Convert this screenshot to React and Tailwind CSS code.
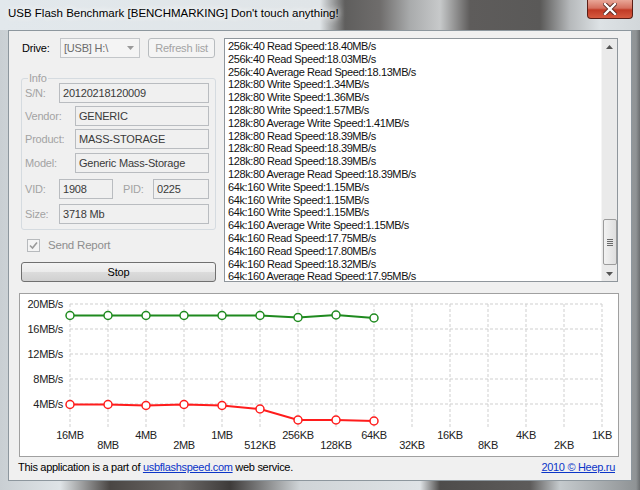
import React from 'react';

const logLines = [
  '256k:40 Read Speed:18.40MB/s',
  '256k:40 Read Speed:18.03MB/s',
  '256k:40 Average Read Speed:18.13MB/s',
  '128k:80 Write Speed:1.34MB/s',
  '128k:80 Write Speed:1.36MB/s',
  '128k:80 Write Speed:1.57MB/s',
  '128k:80 Average Write Speed:1.41MB/s',
  '128k:80 Read Speed:18.39MB/s',
  '128k:80 Read Speed:18.39MB/s',
  '128k:80 Read Speed:18.39MB/s',
  '128k:80 Average Read Speed:18.39MB/s',
  '64k:160 Write Speed:1.15MB/s',
  '64k:160 Write Speed:1.15MB/s',
  '64k:160 Write Speed:1.15MB/s',
  '64k:160 Average Write Speed:1.15MB/s',
  '64k:160 Read Speed:17.75MB/s',
  '64k:160 Read Speed:17.80MB/s',
  '64k:160 Read Speed:18.32MB/s',
  '64k:160 Average Read Speed:17.95MB/s',
];

const sizes = ['16MB', '8MB', '4MB', '2MB', '1MB', '512KB', '256KB', '128KB', '64KB', '32KB', '16KB', '8KB', '4KB', '2KB', '1KB'];
const yLabels = ['20MB/s', '16MB/s', '12MB/s', '8MB/s', '4MB/s'];
const readY = [316.5, 316.5, 316.5, 316.5, 316.5, 316.5, 318.5, 316, 319];
const writeY = [405.5, 405.5, 406.5, 405.5, 406.5, 410, 421, 421, 422];

const gx = (i) => 70 + 38 * i;

function Field({ label, labelW, width, value }) {
  return (
    <div className="flex items-center h-[20px]">
      {label && <span className={`text-[#a3a3a3] ${labelW}`}>{label}</span>}
      <div className={`h-[20px] ${width} border border-[#b9bcc0] bg-[#f0f0f0] px-[3px] leading-[18px] text-[#3a3a3a]`}>{value}</div>
    </div>
  );
}

function Chart() {
  return (
    <svg width="598" height="162" className="block">
      <g transform="translate(-20,-295)">
        {sizes.map((s, i) => (
          <line key={s} x1={gx(i)} y1={305} x2={gx(i)} y2={430} stroke="#cfcfcf" strokeDasharray="3 2" />
        ))}
        {[305, 330, 355, 380, 405].map((y) => (
          <line key={y} x1={70} y1={y} x2={602} y2={y} stroke="#cfcfcf" strokeDasharray="3 2" />
        ))}
        {yLabels.map((l, i) => (
          <text key={l} x={63} y={305 + i * 25 + 4} textAnchor="end" fontSize="11" letterSpacing="-0.3" fill="#222" fontFamily="Liberation Sans, Arial, sans-serif">{l}</text>
        ))}
        {sizes.map((s, i) => (
          <text key={s} x={gx(i)} y={i % 2 === 0 ? 440 : 450} textAnchor="middle" fontSize="11" letterSpacing="-0.3" fill="#222" fontFamily="Liberation Sans, Arial, sans-serif">{s}</text>
        ))}
        <polyline points={readY.map((y, i) => `${gx(i)},${y}`).join(' ')} fill="none" stroke="#1f8a1f" strokeWidth="2" />
        <polyline points={writeY.map((y, i) => `${gx(i)},${y}`).join(' ')} fill="none" stroke="#ff1c1c" strokeWidth="2" />
        {readY.map((y, i) => (
          <circle key={'r' + i} cx={gx(i)} cy={y} r="4" fill="#fff" stroke="#1f8a1f" strokeWidth="1.5" />
        ))}
        {writeY.map((y, i) => (
          <circle key={'w' + i} cx={gx(i)} cy={y} r="4" fill="#fff" stroke="#ff1c1c" strokeWidth="1.5" />
        ))}
      </g>
    </svg>
  );
}

export default function App() {
  return (
    <div className="w-[640px] h-[490px] flex flex-col font-['Liberation_Sans',Arial,sans-serif] text-[11px] tracking-[-0.2px] bg-[linear-gradient(90deg,#c9cfd3_0px,#dfe4e7_60px,#4a4644_110px,#6d6a68_180px,#3e3b3a_230px,#cfd4d7_300px,#dfe3e6_420px,#4e4c4b_440px,#5d5b5a_530px,#c5cacd_560px,#8f9395_636px,#6b6e70_640px)]">
      {/* title bar */}
      <div className="h-[30px] flex items-start relative bg-[linear-gradient(90deg,#e2e8ec_0px,#e0e5e8_320px,#5f5e5d_345px,#6f6d6c_380px,#a9abac_410px,#c7c9ca_440px,#5e5c5b_470px,#5a5958_540px,#b6b9bb_570px,#dde2e5_600px,#d2d7da_640px)]">
        <span className="ml-[8px] mt-[6px] text-[11.5px] tracking-normal leading-[14px] text-black [text-shadow:0_0_6px_#fff,0_0_10px_#fff]">
          USB Flash Benchmark [BENCHMARKING] Don't touch anything!
        </span>
        <div className="absolute left-[587px] top-0 w-[46px] h-[19px] rounded-b-[4px] border border-t-0 border-[#5a1e16] bg-[linear-gradient(#e9a697,#d5705f_45%,#c13a25_55%,#d65a3f)] flex items-center justify-center">
          <svg width="14" height="12" viewBox="0 0 14 12">
            <path d="M2 1 L12 11 M12 1 L2 11" stroke="#5a2a22" strokeWidth="4.2" strokeLinecap="square" />
            <path d="M2 1 L12 11 M12 1 L2 11" stroke="#fff" strokeWidth="2.4" strokeLinecap="square" />
          </svg>
        </div>
      </div>

      {/* client area */}
      <div className="mx-[8px] mb-[9px] flex-1 bg-[#f0f0f0] border border-[#8d979e] flex flex-col text-black">
        <div className="flex mt-[7px] ml-[12px]">
          {/* left column */}
          <div className="w-[195px] flex flex-col">
            <div className="flex items-center h-[20px]">
              <span className="w-[39px] pl-[1px]">Drive:</span>
              <div className="w-[80px] h-[20px] border border-[#c3c6c9] bg-[#f4f4f4] flex items-center justify-between pl-[3px] pr-[5px] text-[#6b6b6b]">
                <span>[USB] H:\</span>
                <svg width="7" height="4" viewBox="0 0 7 4"><path d="M0 0 H7 L3.5 4 Z" fill="#9a9a9a" /></svg>
              </div>
              <div className="ml-[8px] w-[67px] h-[20px] rounded-[3px] border border-[#b8bcbf] bg-[#f4f4f4] flex items-center justify-center text-[#a3a3a3]">
                Refresh list
              </div>
            </div>

            <div className="mt-[20px] relative border border-[#d5dbe0] rounded-[3px] h-[152px] px-[3px] pt-[4px] flex flex-col">
              <span className="absolute left-[6px] -top-[7px] bg-[#f0f0f0] px-[1px] leading-[12px] text-[#a3a3a3]">Info</span>
              <Field label="S/N:" labelW="w-[34px]" width="w-[150px]" value="20120218120009" />
              <div className="mt-[3px]">
                <Field label="Vendor:" labelW="w-[50px]" width="w-[134px]" value="GENERIC" />
              </div>
              <div className="mt-[3px]">
                <Field label="Product:" labelW="w-[50px]" width="w-[134px]" value="MASS-STORAGE" />
              </div>
              <div className="mt-[4px]">
                <Field label="Model:" labelW="w-[50px]" width="w-[134px]" value="Generic Mass-Storage" />
              </div>
              <div className="flex items-center mt-[6px]">
                <Field label="VID:" labelW="w-[34px]" width="w-[54px]" value="1908" />
                <Field label="PID:" labelW="ml-[10px] w-[30px]" width="w-[56px]" value="0225" />
              </div>
              <div className="mt-[5px]">
                <Field label="Size:" labelW="w-[34px]" width="w-[150px]" value="3718 Mb" />
              </div>
            </div>

            <div className="mt-[9px] ml-[6px] flex items-center h-[13px] text-[#8e8e8e]">
              <div className="w-[13px] h-[13px] border border-[#b7babd] bg-[#f4f4f4] flex items-center justify-center">
                <svg width="9" height="9" viewBox="0 0 9 9"><path d="M1 4.5 L3.5 7 L8 1.5" fill="none" stroke="#9a9a9a" strokeWidth="1.6" /></svg>
              </div>
              <span className="ml-[8px] text-[11.5px]">Send Report</span>
            </div>

            <div className="mt-[10px] h-[20px] rounded-[3px] border border-[#707070] bg-[linear-gradient(#f3f3f3,#ebebeb_50%,#dcdcdc_50%,#d0d0d0)] flex items-center justify-center">
              Stop
            </div>
          </div>

          {/* log listbox */}
          <div className="ml-[8px] w-[394px] h-[244px] border border-[#8f969c] bg-white flex">
            <div className="flex-1 pl-[3px] pt-[1px] leading-[12.8px] tracking-[-0.4px] text-[#111] overflow-hidden">
              {logLines.map((l, i) => (
                <div key={i} className="whitespace-nowrap">{l}</div>
              ))}
            </div>
            <div className="w-[16px] bg-[#eaeaea] border-l border-[#f5f5f5] flex flex-col items-center">
              <svg className="mt-[6px]" width="7" height="4" viewBox="0 0 7 4"><path d="M3.5 0 L7 4 H0 Z" fill="#555" /></svg>
              <div className="mt-auto w-[14px] h-[46px] rounded-[2px] border border-[#9c9c9c] bg-[linear-gradient(90deg,#f2f2f2,#dedede)] flex flex-col items-center justify-center gap-[1px]">
                <div className="w-[6px] h-px bg-[#6a6a6a]" />
                <div className="w-[6px] h-px bg-[#6a6a6a]" />
                <div className="w-[6px] h-px bg-[#6a6a6a]" />
                <div className="w-[6px] h-px bg-[#6a6a6a]" />
              </div>
              <svg className="mt-[7px] mb-[5px]" width="7" height="4" viewBox="0 0 7 4"><path d="M0 0 H7 L3.5 4 Z" fill="#555" /></svg>
            </div>
          </div>
        </div>

        {/* chart */}
        <div className="mt-[11px] ml-[10px] w-[600px] h-[164px] border border-[#a0a0a0] bg-white">
          <Chart />
        </div>

        {/* footer */}
        <div className="mt-[3px] mx-[9px] flex justify-between leading-[14px] tracking-[-0.3px]">
          <span>
            This application is a part of{' '}
            <span className="text-[#0b35c8] underline">usbflashspeed.com</span> web service.
          </span>
          <span className="text-[#0b35c8] underline mr-[7px]">2010 © Heep.ru</span>
        </div>
      </div>
    </div>
  );
}
